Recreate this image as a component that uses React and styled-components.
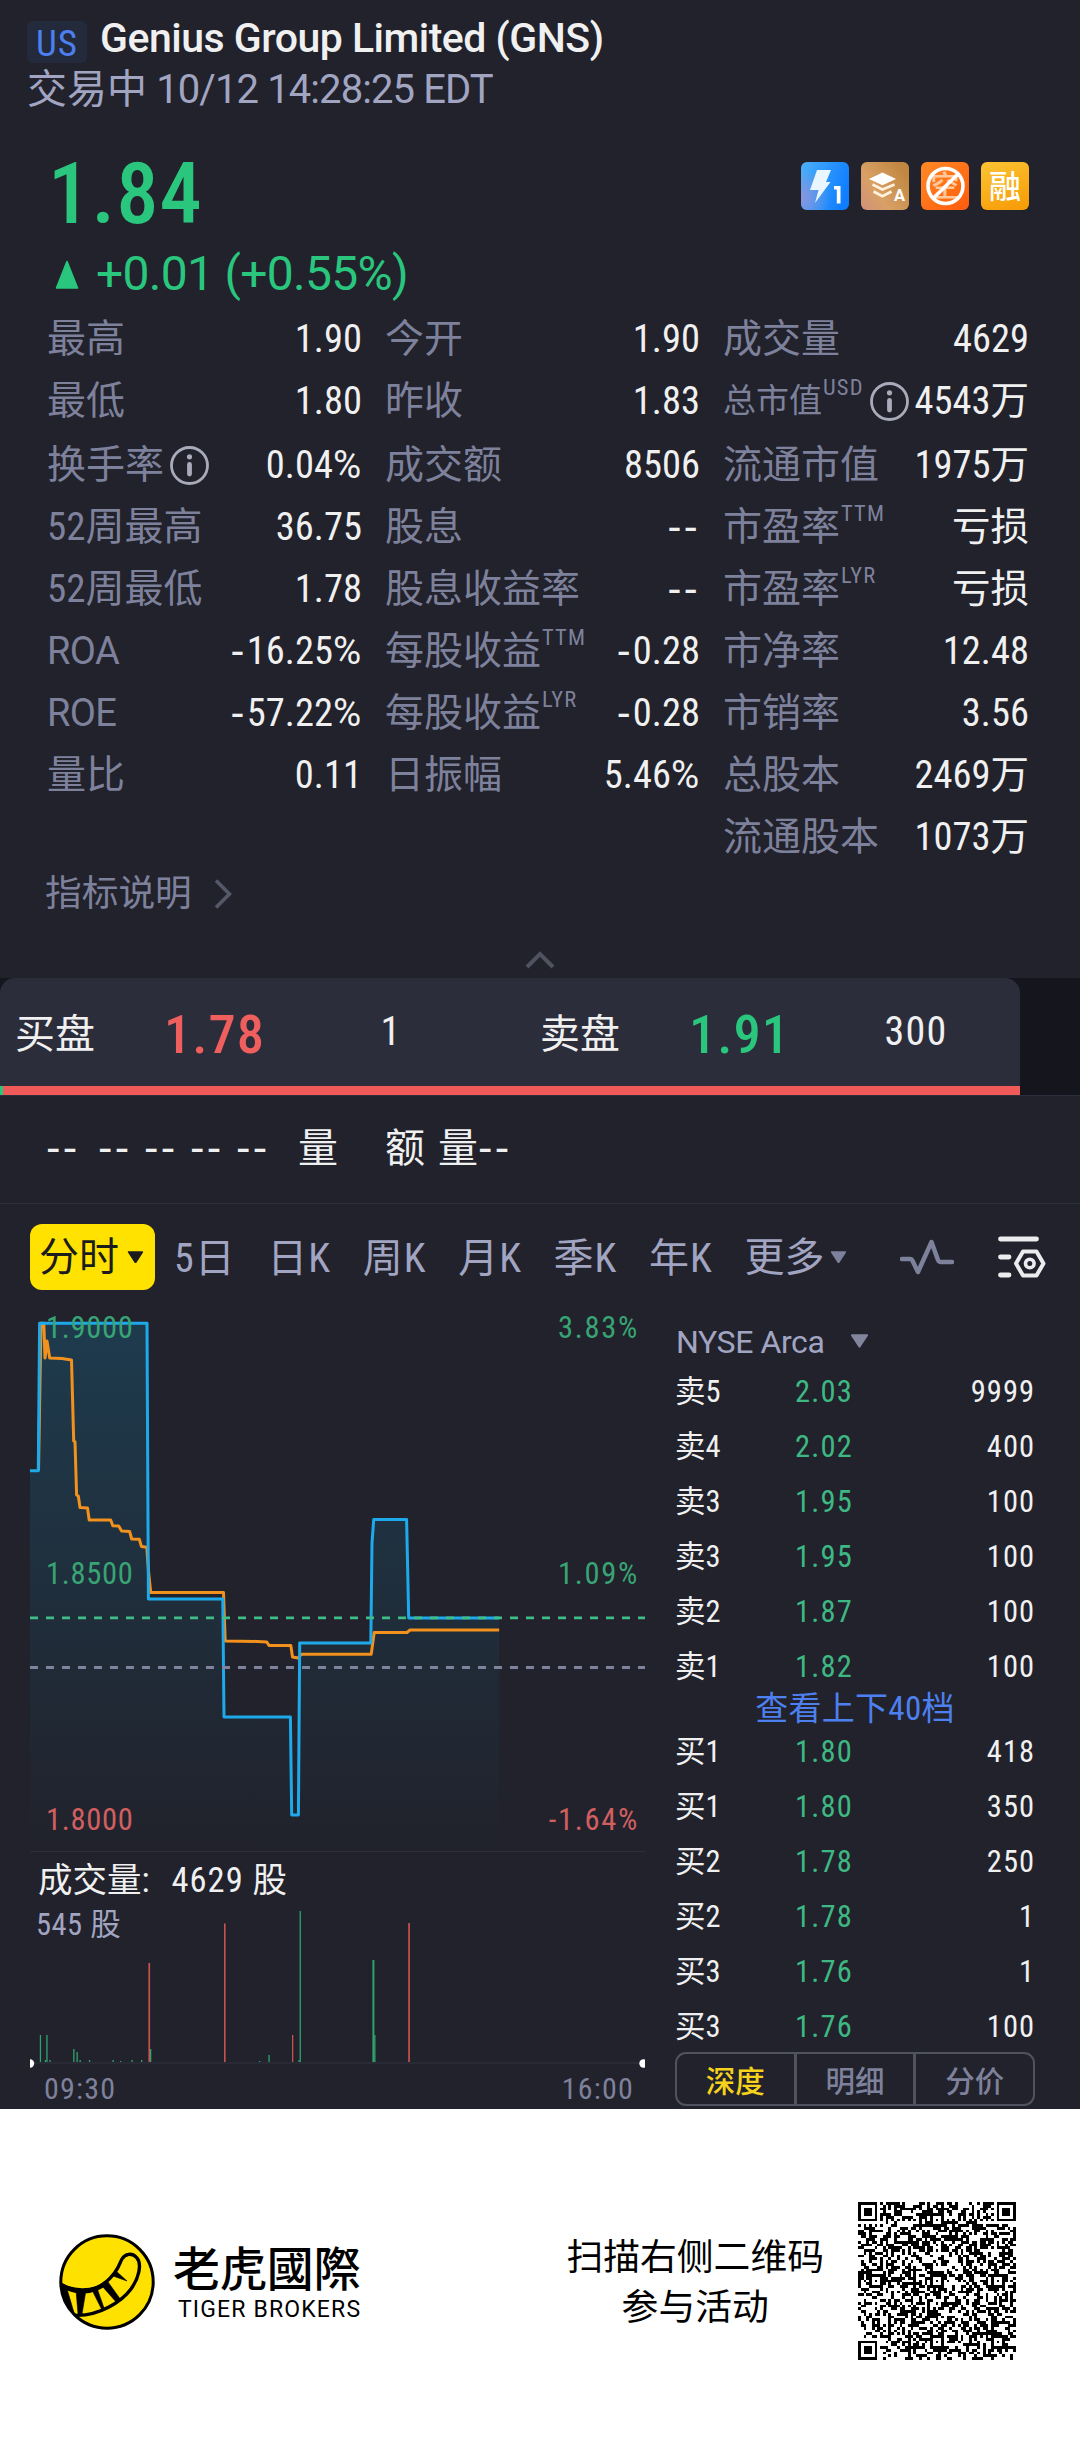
import React from "react";
import styled, { createGlobalStyle } from "styled-components";

const Colors = {
  Bg: "#21222b",
  Panel: "#2c2d3b",
  Dark: "#15151e",
  Line: "#2d2e3b",
  Label: "#7e819b",
  Soft: "#a2a5c2",
  White: "#f0f0f1",
  Green: "#2ac67e",
  GreenSoft: "#3eb883",
  Red: "#f05a58",
  Blue: "#4d80ee",
  Yellow: "#ffe200",
};

const wideFont = `Roboto, "Noto Sans CJK SC", sans-serif`;

const stats = [
  [
    { label: "最高", value: "1.90" },
    { label: "最低", value: "1.80" },
    { label: "换手率", info: true, value: "0.04%" },
    { label: "52周最高", value: "36.75" },
    { label: "52周最低", value: "1.78" },
    { label: "ROA", wide: true, value: "-16.25%" },
    { label: "ROE", wide: true, value: "-57.22%" },
    { label: "量比", value: "0.11" },
  ],
  [
    { label: "今开", value: "1.90" },
    { label: "昨收", value: "1.83" },
    { label: "成交额", value: "8506" },
    { label: "股息", value: "--" },
    { label: "股息收益率", value: "--" },
    { label: "每股收益", sup: "TTM", value: "-0.28" },
    { label: "每股收益", sup: "LYR", value: "-0.28" },
    { label: "日振幅", value: "5.46%" },
  ],
  [
    { label: "成交量", value: "4629" },
    { label: "总市值", sup: "USD", info: true, small: true, value: "4543万" },
    { label: "流通市值", value: "1975万" },
    { label: "市盈率", sup: "TTM", value: "亏损" },
    { label: "市盈率", sup: "LYR", value: "亏损" },
    { label: "市净率", value: "12.48" },
    { label: "市销率", value: "3.56" },
    { label: "总股本", value: "2469万" },
    { label: "流通股本", value: "1073万" },
  ],
];

const asks = [
  ["卖5", "2.03", "9999"],
  ["卖4", "2.02", "400"],
  ["卖3", "1.95", "100"],
  ["卖3", "1.95", "100"],
  ["卖2", "1.87", "100"],
  ["卖1", "1.82", "100"],
];

const bids = [
  ["买1", "1.80", "418"],
  ["买1", "1.80", "350"],
  ["买2", "1.78", "250"],
  ["买2", "1.78", "1"],
  ["买3", "1.76", "1"],
  ["买3", "1.76", "100"],
];

const periods = ["5日", "日K", "周K", "月K", "季K", "年K"];

// chart space: x starts at the left edge of the plot, y at the top of the section
const pricePoints =
  "0,161.7 8.3,161.7 9.6,14.2 117,14.2 118.4,290 192.8,290 194,408 260.4,408 261.7,506 268.4,506 269.7,333.9 340.8,333.9 342,233.9 343.7,210.6 376.6,210.6 378.7,308.9 469.2,308.9";
const avgPoints =
  "8.5,161.7 11,14.2 13.8,14.2 15,49 17,32 19.7,49 32,49.5 41.5,51 43.7,132 45,132.8 46.6,186 48.3,187 50,198.5 57.5,199 59.2,211 80.7,211 82.8,216.7 88.7,217 91.6,222 99.6,222.4 101.7,230 109.3,230.3 111.4,237.4 116.8,238.2 118.5,262 120.7,283.5 193.5,283.5 195.2,332 227.6,332.4 236.8,333 239,336.4 260.8,336.4 262.5,348 268,349 271.3,345.3 341.2,345.3 344.2,323.5 377,323.5 380,321 469.2,321";

const volumes = [
  [9.8, 27, "g"], [14.8, 2, "g"], [16.3, 27, "g"], [19.4, 2, "g"], [43.2, 13, "g"],
  [46.5, 10, "g"], [49.5, 2, "g"], [58.9, 2, "g"], [82.5, 2, "g"], [90, 1, "g"],
  [101.5, 2, "g"], [111, 2, "g"], [118.4, 99, "r", 1.7], [120, 13, "g"], [194, 138.5, "r", 1.6],
  [229, 1, "g"], [238.4, 7, "g"], [262, 27, "r"], [268.4, 2, "g"], [269.6, 151, "g"],
  [342.4, 102, "g", 2], [344.2, 27, "g"], [378.2, 139, "r", 1.7],
];

const QR_SIZE = 57;

const buildQr = () => {
  let seed = 20231012;
  const rand = () => {
    seed = (seed * 1103515245 + 12345) % 2147483648;
    return seed / 2147483648;
  };
  const cells = Array.from({ length: QR_SIZE }, () =>
    Array.from({ length: QR_SIZE }, () => rand() > 0.5)
  );
  for (let i = 8; i < QR_SIZE - 8; i++) {
    cells[6][i] = i % 2 === 0;
    cells[i][6] = i % 2 === 0;
  }
  const ring = (cx, cy, r, on) => {
    for (let y = -r; y <= r; y++) {
      for (let x = -r; x <= r; x++) {
        const row = cells[cy + y];
        if (!row || row[cx + x] === undefined) continue;
        row[cx + x] = on(Math.max(Math.abs(x), Math.abs(y)));
      }
    }
  };
  [[3, 3], [QR_SIZE - 4, 3], [3, QR_SIZE - 4]].forEach(([x, y]) =>
    ring(x, y, 4, (d) => d !== 2 && d !== 4)
  );
  [[28, 6], [6, 28], [28, 28], [50, 28], [28, 50], [50, 50]].forEach(([x, y]) =>
    ring(x, y, 2, (d) => d !== 1)
  );
  let d = "";
  cells.forEach((row, y) =>
    row.forEach((on, x) => {
      if (on) d += `M${x} ${y}h1v1h-1z`;
    })
  );
  return d;
};

const qrPath = buildQr();

// the condensed face has narrow signs, so they get a wider one
const Figures = ({ children }) =>
  children.split(/([-%])/).map((part, i) => {
    if (part === "-") return <Dash key={i}>-</Dash>;
    if (part === "%") return <Percent key={i}>%</Percent>;
    return part;
  });

const InfoIcon = () => (
  <svg width="39" height="39" viewBox="0 0 39 39">
    <circle cx="19.5" cy="19.5" r="18" fill="none" stroke="#a9abba" strokeWidth="2.8" />
    <circle cx="19.5" cy="10.8" r="2.6" fill="#a9abba" />
    <rect x="17.1" y="16" width="4.8" height="14.5" rx="2.4" fill="#a9abba" />
  </svg>
);

const Triangle = ({ size = 16, color }) => (
  <svg width={size} height={size * 0.75} viewBox="0 0 16 12">
    <path d="M1.6 1h12.8L8 10.8z" fill={color} stroke={color} strokeWidth="1.6" strokeLinejoin="round" />
  </svg>
);

const BoltBadge = () => (
  <svg width="48" height="48" viewBox="0 0 48 48">
    <defs>
      <linearGradient id="bolt" x1="0" y1="0.2" x2="1" y2="0.5">
        <stop offset="0" stopColor="#49aef8" />
        <stop offset="1" stopColor="#0f7dff" />
      </linearGradient>
      <radialGradient id="boltGlow" cx="0" cy="0.75" r="0.6">
        <stop offset="0" stopColor="#8b94dc" />
        <stop offset="1" stopColor="#8b94dc" stopOpacity="0" />
      </radialGradient>
    </defs>
    <rect width="48" height="48" rx="6" fill="url(#bolt)" />
    <rect width="48" height="48" rx="6" fill="url(#boltGlow)" />
    <path d="M16 8h14l-5 12h4.5L14 41l3.5-13H9z" fill="#e9f5ff" />
    <path d="M33 24h6.5v17.500h-3.700V27.500H33z" fill="#fff" />
  </svg>
);

const LayersBadge = () => (
  <svg width="48" height="48" viewBox="0 0 48 48">
    <defs>
      <linearGradient id="layers" x1="0" y1="1" x2="1" y2="0.3">
        <stop offset="0" stopColor="#cf917c" />
        <stop offset="0.4" stopColor="#d9a066" />
        <stop offset="1" stopColor="#c18740" />
      </linearGradient>
    </defs>
    <rect width="48" height="48" rx="6" fill="url(#layers)" />
    <path d="M21.5 10.5L35 17l-13.5 6.300L8 17z" fill="#fff" />
    <path d="M11.500 22.500l10 5 12-5M12.500 29.500l9 4.800 9-4.800" fill="none" stroke="#fff3e0" strokeWidth="2.7" />
    <text x="33" y="39" fontSize="16.5" fontWeight="700" fontFamily="Roboto, sans-serif" fill="#fff">A</text>
  </svg>
);

const NoShortBadge = () => (
  <svg width="48" height="48" viewBox="0 0 48 48">
    <defs>
      <linearGradient id="short" x1="0" y1="0" x2="1" y2="1">
        <stop offset="0" stopColor="#ff8a26" />
        <stop offset="1" stopColor="#ff5a0c" />
      </linearGradient>
    </defs>
    <rect width="48" height="48" rx="6" fill="url(#short)" />
    <text x="24" y="34.5" fontSize="29" fontWeight="500" textAnchor="middle" fontFamily="'Noto Sans CJK SC', sans-serif" fill="#ffc79a">空</text>
    <circle cx="24.5" cy="24" r="17.5" fill="none" stroke="#fff" strokeWidth="3.6" />
    <path d="M37 12L12 36.5" stroke="#fff" strokeWidth="3.6" />
  </svg>
);

const MarginBadge = () => (
  <svg width="48" height="48" viewBox="0 0 48 48">
    <defs>
      <linearGradient id="margin" x1="0.3" y1="0" x2="0.7" y2="1">
        <stop offset="0" stopColor="#fbc130" />
        <stop offset="1" stopColor="#f79d08" />
      </linearGradient>
    </defs>
    <rect width="48" height="48" rx="6" fill="url(#margin)" />
    <text x="24" y="36" fontSize="32" fontWeight="500" textAnchor="middle" fontFamily="'Noto Sans CJK SC', sans-serif" fill="#fff">融</text>
  </svg>
);

const TigerLogo = () => (
  <svg width="96" height="96" viewBox="0 0 96 96">
    <defs>
      <clipPath id="logoClip">
        <circle cx="48" cy="48" r="46" />
      </clipPath>
    </defs>
    <circle cx="48" cy="48" r="46" fill="#ffe100" />
    <g clipPath="url(#logoClip)" stroke="#000" strokeLinejoin="round" fill="none">
      <path d="M-2 48C12 58 34 59 47 48S60 30 63 25s10-7 15-1 2 20-6 31S40 84 12 81" strokeWidth="3.4" />
      <path d="M0 50C16 60 34 60 48 48" strokeWidth="4.5" />
      <path d="M-1 51l9 4 8 27-7-4zM17 56h10l-4 24h-4zM33 56l5-2 7 20-2 2zM43 52l6-4 13 18-4 3zM54 42l3-5 11 10z" fill="#000" strokeWidth="0.6" />
    </g>
    <circle cx="48" cy="48" r="46.2" fill="none" stroke="#000" strokeWidth="3" />
  </svg>
);

const PriceChart = () => (
  <svg width="615" height="543" viewBox="0 0 615 543">
    <defs>
      <linearGradient id="area" x1="0" y1="0" x2="0" y2="1">
        <stop offset="0" stopColor="#0fa5e0" stopOpacity="0.19" />
        <stop offset="1" stopColor="#0fa5e0" stopOpacity="0" />
      </linearGradient>
    </defs>
    <polygon points={`${pricePoints} 469.2,542 0,542`} fill="url(#area)" />
    <polyline points={avgPoints} fill="none" stroke="#f2911d" strokeWidth="3" strokeLinejoin="round" />
    <polyline points={pricePoints} fill="none" stroke="#1eaaea" strokeWidth="3" strokeLinejoin="round" />
    <line x1="0" x2="615" y1="308.9" y2="308.9" stroke="#41bd87" strokeWidth="2.8" strokeDasharray="8 8" />
    <line x1="0" x2="615" y1="358.5" y2="358.5" stroke="#7f829c" strokeWidth="2.8" strokeDasharray="8 8" />
    <AxisText x="16" y="29" fill="#38a474">1.9000</AxisText>
    <AxisText x="16" y="275" fill="#38a474">1.8500</AxisText>
    <AxisText x="16" y="521" fill="#d15f60">1.8000</AxisText>
    <AxisText $right x="609" y="29" fill="#38a474">3.83%</AxisText>
    <AxisText $right x="609" y="275" fill="#38a474">1.09%</AxisText>
    <AxisText $right x="609" y="521" fill="#d15f60">-1.64%</AxisText>
    <line x1="0" x2="615" y1="542.5" y2="542.5" stroke={Colors.Line} />
  </svg>
);

const VolumeChart = () => (
  <svg width="615" height="158" viewBox="0 0 615 158">
    <line x1="0" x2="615" y1="153" y2="153" stroke={Colors.Line} strokeWidth="1.5" />
    {volumes.map(([x, h, side, w = 1.3], i) => (
      <rect key={i} x={x} y={152 - h} width={w} height={h} fill={side === "g" ? "#2fa26e" : "#c7534f"} />
    ))}
    <circle cx="0" cy="153.5" r="4.2" fill="#fff" />
    <circle cx="613.5" cy="153.5" r="4.2" fill="#fff" />
  </svg>
);

const App = () => {
  return (
    <>
      <GlobalStyle />
      <Screen>
        <Head>
          <TitleRow>
            <Market>US</Market>
            <Title>Genius Group Limited (GNS)</Title>
          </TitleRow>
          <Status>
            交易中 <StatusTime>10/12 14:28:25 EDT</StatusTime>
          </Status>
        </Head>

        <Quote>
          <div>
            <Price>1.84</Price>
            <Change>
              <svg width="26" height="30" viewBox="0 0 26 30">
                <path d="M13 2.5L23.5 29h-21z" fill={Colors.Green} stroke={Colors.Green} strokeWidth="1.6" strokeLinejoin="round" />
              </svg>
              +0.01 (+0.55%)
            </Change>
          </div>
          <Badges>
            <BoltBadge />
            <LayersBadge />
            <NoShortBadge />
            <MarginBadge />
          </Badges>
        </Quote>

        <Stats>
          {stats.map((col, i) => (
            <StatColumn key={i}>
              {col.map((item, id) => (
                <StatRow key={id}>
                  <StatLabel $small={item.small} $wide={item.wide}>
                    {item.label}
                    {item.sup && <Sup>{item.sup}</Sup>}
                    {item.info && <InfoIcon />}
                  </StatLabel>
                  <StatValue>
                    <Figures>{item.value}</Figures>
                  </StatValue>
                </StatRow>
              ))}
            </StatColumn>
          ))}
        </Stats>

        <Explain>
          指标说明
          <svg width="18" height="32" viewBox="0 0 18 32">
            <path d="M2 2.5L15.5 16 2 29.5" fill="none" stroke="#555868" strokeWidth="3.6" />
          </svg>
        </Explain>
        <Collapse>
          <svg width="30" height="18" viewBox="0 0 30 18">
            <path d="M2 16L15 3l13 13" fill="none" stroke="#50535f" strokeWidth="4" />
          </svg>
        </Collapse>

        <OrderBar>
          <OrderPanel>
            <OrderSides>
              <OrderText>买盘</OrderText>
              <OrderPrice $color="#ee5f5e">1.78</OrderPrice>
              <OrderSize>1</OrderSize>
              <OrderText>卖盘</OrderText>
              <OrderPrice $color={Colors.Green}>1.91</OrderPrice>
              <OrderSize>300</OrderSize>
            </OrderSides>
            <Ratio />
          </OrderPanel>
        </OrderBar>

        <Ohlc>
          {[52, 46, 46, 46, 62].map((w, i) => (
            <OhlcItem key={i} $w={w}>
              <Figures>--</Figures>
            </OhlcItem>
          ))}
          <OhlcItem $w={87}>量</OhlcItem>
          <OhlcItem $w={53}>额</OhlcItem>
          <OhlcItem>
            <Figures>量--</Figures>
          </OhlcItem>
        </Ohlc>

        <Tabs>
          <ActiveTab>
            分时
            <Triangle size={17} color="#1c1c1c" />
          </ActiveTab>
          {periods.map((item) => (
            <Tab key={item}>{item}</Tab>
          ))}
          <MoreTab>
            更多
            <Triangle size={17} color="#7e819b" />
          </MoreTab>
          <TabIcons>
            <svg width="54" height="36" viewBox="0 0 54 36">
              <path d="M2 20h8c1.5 0 2 .5 2.6 2L18 33 31.5 3l6.5 18c.6 1.5 1.3 2 2.8 2H52" fill="none" stroke="#7e819b" strokeWidth="4.5" strokeLinejoin="round" strokeLinecap="round" />
            </svg>
            <svg width="48" height="44" viewBox="0 0 48 44">
              <path d="M2.5 4h36M2.5 22H11M2.5 40H11" stroke="#ececee" strokeWidth="4.8" strokeLinecap="round" />
              <path d="M25 16.5h13.5l7 12-7 12H25l-7-12z" fill="none" stroke="#ececee" strokeWidth="4" strokeLinejoin="round" />
              <circle cx="31.8" cy="28.5" r="4.3" fill="none" stroke="#ececee" strokeWidth="3.6" />
            </svg>
          </TabIcons>
        </Tabs>

        <Main>
          <ChartSide>
            <PriceChart />
            <VolumeTitle>
              <span>成交量:</span>
              <Volume>4629 股</Volume>
            </VolumeTitle>
            <VolumeArea>
              <VolumeMax>545 股</VolumeMax>
              <VolumeChart />
            </VolumeArea>
            <TimeAxis>
              <span>09:30</span>
              <span>16:00</span>
            </TimeAxis>
          </ChartSide>

          <BookSide>
            <Exchange>
              NYSE Arca
              <Triangle size={19} color="#82859d" />
            </Exchange>
            {asks.map((item, id) => (
              <BookRow key={id}>
                <span>{item[0]}</span>
                <BookPrice>{item[1]}</BookPrice>
                <BookSize>{item[2]}</BookSize>
              </BookRow>
            ))}
            <DepthLink>查看上下40档</DepthLink>
            {bids.map((item, id) => (
              <BookRow key={id}>
                <span>{item[0]}</span>
                <BookPrice>{item[1]}</BookPrice>
                <BookSize>{item[2]}</BookSize>
              </BookRow>
            ))}
            <BookTabs>
              <BookTab $active>深度</BookTab>
              <BookTab>明细</BookTab>
              <BookTab>分价</BookTab>
            </BookTabs>
          </BookSide>
        </Main>

        <Footer>
          <Brand>
            <TigerLogo />
            <div>
              <BrandName>老虎國際</BrandName>
              <BrandSub>TIGER BROKERS</BrandSub>
            </div>
          </Brand>
          <Promo>
            <PromoText>
              扫描右侧二维码
              <br />
              参与活动
            </PromoText>
            <svg width="158" height="158" viewBox={`0 0 ${QR_SIZE} ${QR_SIZE}`} shapeRendering="crispEdges">
              <path d={qrPath} fill="#000" />
            </svg>
          </Promo>
        </Footer>
      </Screen>
    </>
  );
};

const GlobalStyle = createGlobalStyle`
  body {
    margin: 0;
    background: ${Colors.Bg};
  }
  * {
    box-sizing: border-box;
  }
  svg {
    display: block;
    flex-shrink: 0;
  }
`;

const Screen = styled.div`
  width: 1080px;
  height: 2454px;
  overflow: hidden;
  display: flex;
  flex-direction: column;
  background-color: ${Colors.Bg};
  color: ${Colors.White};
  font-family: "Roboto Condensed", "Noto Sans CJK SC", sans-serif;
  white-space: nowrap;
`;

const Dash = styled.span`
  font-family: "DejaVu Sans", sans-serif;
  line-height: 1;
  letter-spacing: 2.3px;
`;

const Percent = styled.span`
  font-family: Roboto, sans-serif;
  line-height: 1;
  letter-spacing: 0.8px;
`;

const Head = styled.div`
  height: 150px;
  padding: 14px 27px 0;
`;

const TitleRow = styled.div`
  display: flex;
  height: 52px;
`;

const Market = styled.div`
  width: 60px;
  height: 42px;
  margin: 7px 13px 0 0;
  border-radius: 6px;
  background-color: #222a3b;
  color: ${Colors.Blue};
  font-size: 37px;
  line-height: 46px;
  letter-spacing: 1px;
  text-align: center;
`;

const Title = styled.div`
  font-family: ${wideFont};
  font-size: 41px;
  line-height: 48px;
  font-weight: 500;
  letter-spacing: -0.5px;
`;

const Status = styled.div`
  color: ${Colors.Soft};
  font-size: 40px;
  line-height: 48px;
`;

const StatusTime = styled.span`
  font-family: ${wideFont};
  letter-spacing: -0.9px;
`;

const Quote = styled.div`
  height: 158px;
  padding: 0 51px 0 48px;
  display: flex;
  justify-content: space-between;
  color: ${Colors.Green};
`;

const Price = styled.div`
  font-size: 84.5px;
  line-height: 90px;
  font-weight: 500;
  letter-spacing: 1.2px;
`;

const Change = styled.div`
  display: flex;
  align-items: center;
  gap: 16px;
  margin-top: 6px;
  padding-left: 6px;
  font-family: ${wideFont};
  font-size: 48px;
  line-height: 56px;
  letter-spacing: -0.7px;
`;

const Badges = styled.div`
  display: flex;
  gap: 12px;
  padding-top: 12px;
`;

const Stats = styled.div`
  height: 566px;
  padding: 0 51px 0 47px;
  display: flex;
  gap: 23px;
`;

const StatColumn = styled.div`
  width: 315px;
  &:last-child {
    width: 306px;
  }
`;

const StatRow = styled.div`
  height: 62px;
  display: flex;
  justify-content: space-between;
  align-items: center;
  line-height: 62px;
  &:nth-child(3) {
    margin-top: 2px;
  }
`;

const StatLabel = styled.div`
  display: flex;
  align-items: center;
  color: ${Colors.Label};
  font-family: ${(p) => (p.$wide ? wideFont : "inherit")};
  font-size: ${(p) => (p.$small ? 33 : p.$wide ? 38 : 39)}px;
  letter-spacing: ${(p) => (p.$wide ? -0.6 : 0)}px;
  svg {
    margin-left: ${(p) => (p.$small ? 6 : 6)}px;
  }
`;

const Sup = styled.span`
  font-size: 22.5px;
  align-self: flex-start;
  line-height: 34px;
  margin-left: 1px;
  letter-spacing: 1.2px;
`;

const StatValue = styled.div`
  font-size: 38.5px;
`;

const Explain = styled.div`
  height: 40px;
  padding-left: 45px;
  display: flex;
  align-items: center;
  gap: 22px;
  color: ${Colors.Label};
  font-size: 36.7px;
  line-height: 40px;
`;

const Collapse = styled.div`
  height: 64px;
  display: flex;
  justify-content: center;
  align-items: flex-end;
  padding-bottom: 9px;
`;

const OrderBar = styled.div`
  height: 118px;
  background-color: ${Colors.Dark};
  border-bottom: 1px solid ${Colors.Line};
`;

const OrderPanel = styled.div`
  width: 1020px;
  height: 117px;
  border-radius: 15px 15px 0 0;
  background-color: ${Colors.Panel};
`;

const OrderSides = styled.div`
  height: 108px;
  padding: 0 0 3px 15px;
  display: grid;
  grid-template-columns: 149px 159px 217px 149px 159px 134px;
  align-items: center;
`;

const OrderText = styled.div`
  font-size: 40px;
`;

const OrderPrice = styled.div`
  padding-top: 6px;
  font-size: 54.5px;
  font-weight: 500;
  letter-spacing: 1px;
  color: ${(p) => p.$color};
`;

const OrderSize = styled.div`
  width: 136px;
  padding-top: 2px;
  font-size: 40px;
  letter-spacing: 1.2px;
  text-align: center;
`;

const Ratio = styled.div`
  height: 9px;
  background-color: ${Colors.Red};
  border-left: 3px solid ${Colors.Green};
`;

const Ohlc = styled.div`
  height: 108px;
  padding: 0 0 1px 46px;
  display: flex;
  align-items: center;
  border-bottom: 1px solid ${Colors.Line};
  font-size: 40px;
  line-height: 60px;
`;

const OhlcItem = styled.span`
  width: ${(p) => (p.$w ? `${p.$w}px` : "auto")};
`;

const Tabs = styled.div`
  height: 105px;
  padding: 20px 34px 0 30px;
  display: flex;
  gap: 31.6px;
  color: ${Colors.Soft};
  font-size: 40px;
  line-height: 69px;
`;

const ActiveTab = styled.div`
  width: 125px;
  height: 66px;
  margin-right: -12.6px;
  padding-left: 9px;
  display: flex;
  align-items: center;
  gap: 8px;
  border-radius: 12px;
  background-color: ${Colors.Yellow};
  color: #1c1c1c;
`;

const Tab = styled.div`
  height: 66px;
  letter-spacing: 1px;
`;

const MoreTab = styled.div`
  height: 66px;
  display: flex;
  align-items: center;
  gap: 6px;
`;

const TabIcons = styled.div`
  height: 66px;
  margin-left: auto;
  display: flex;
  align-items: center;
  gap: 44px;
`;

const Main = styled.div`
  height: 800px;
  display: flex;
  padding: 0 45px 0 30px;
  gap: 30px;
`;

const ChartSide = styled.div`
  width: 615px;
`;

const AxisText = styled.text`
  font-size: 30.5px;
  letter-spacing: ${(p) => (p.$right ? 1.7 : 0.7)}px;
  text-anchor: ${(p) => (p.$right ? "end" : "start")};
`;

const VolumeTitle = styled.div`
  height: 58px;
  padding-left: 8px;
  display: flex;
  gap: 22px;
  font-size: 34.5px;
  line-height: 56px;
`;

const Volume = styled.span`
  letter-spacing: 1px;
`;

const VolumeArea = styled.div`
  position: relative;
  height: 158px;
`;

const VolumeMax = styled.div`
  position: absolute;
  left: 6px;
  top: -3px;
  color: ${Colors.Soft};
  font-size: 30.5px;
  line-height: 36px;
  letter-spacing: 0.5px;
`;

const TimeAxis = styled.div`
  padding: 0 11px 0 14px;
  display: flex;
  justify-content: space-between;
  color: ${Colors.Label};
  font-size: 30px;
  line-height: 41px;
  letter-spacing: 1.2px;
`;

const BookSide = styled.div`
  width: 360px;
  padding-top: 10px;
`;

const Exchange = styled.div`
  height: 45px;
  padding-left: 1px;
  display: flex;
  align-items: center;
  gap: 26px;
  color: ${Colors.Soft};
  font-family: ${wideFont};
  font-size: 32px;
  line-height: 40px;
  letter-spacing: -0.4px;
`;

const BookRow = styled.div`
  height: 55px;
  display: grid;
  grid-template-columns: 120px 1fr 1fr;
  font-size: 30.5px;
  line-height: 55px;
`;

const BookPrice = styled.span`
  color: ${Colors.GreenSoft};
  letter-spacing: 1.2px;
`;

const BookSize = styled.span`
  text-align: right;
  letter-spacing: 1px;
`;

const DepthLink = styled.div`
  height: 30px;
  color: ${Colors.Blue};
  font-size: 33px;
  line-height: 30px;
  letter-spacing: 0.3px;
  text-align: center;
`;

const BookTabs = styled.div`
  height: 54px;
  margin-top: -2px;
  display: flex;
  border: 2px solid #50535f;
  border-radius: 11px;
`;

const BookTab = styled.div`
  flex: 1;
  border-right: 3.5px solid #50535f;
  color: ${(p) => (p.$active ? "#f5d31c" : Colors.Label)};
  font-size: 29.5px;
  font-weight: 500;
  line-height: 56px;
  text-align: center;
  &:last-child {
    border-right: none;
  }
`;

const Footer = styled.div`
  flex: 1;
  padding: 0 64px 0 59px;
  display: flex;
  justify-content: space-between;
  background-color: #fff;
  color: #000;
`;

const Brand = styled.div`
  display: flex;
  gap: 18px;
  padding-top: 125px;
`;

const BrandName = styled.div`
  margin-top: 4px;
  font-family: "Noto Sans CJK TC", sans-serif;
  font-size: 46.9px;
  font-weight: 500;
  line-height: 56px;
`;

const BrandSub = styled.div`
  padding-left: 5px;
  font-family: Roboto, sans-serif;
  font-size: 23px;
  line-height: 32px;
  letter-spacing: 1.15px;
`;

const Promo = styled.div`
  display: flex;
  gap: 34px;
  padding-top: 93px;
`;

const PromoText = styled.div`
  padding-top: 31px;
  font-size: 36.8px;
  line-height: 49.5px;
  text-align: center;
`;

export default App;
